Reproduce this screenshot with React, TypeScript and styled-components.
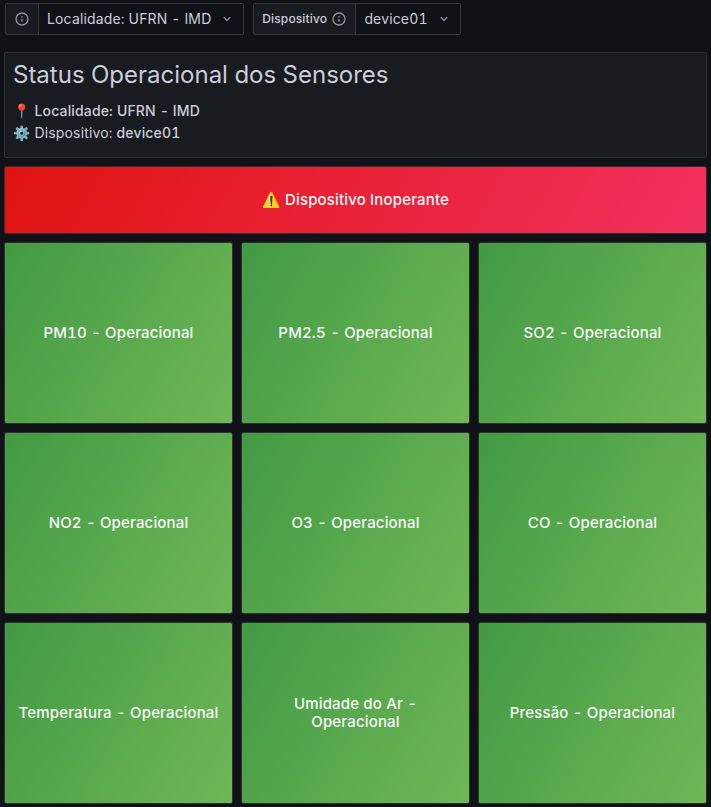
import React from 'react';
import styled, { createGlobalStyle } from 'styled-components';

const GlobalStyle = createGlobalStyle`
  *, *::before, *::after { box-sizing: border-box; }
  body {
    margin: 0;
    background: #111217;
    color: #ccccdc;
    font: 400 14px/22px Inter, "Noto Color Emoji", sans-serif;
    letter-spacing: 0.15px;
  }
`;

const Page = styled.div`
  width: 711px;
  height: 807px;
  overflow: hidden;
  padding: 3px 4px 0;
  font-variant-numeric: tabular-nums;
`;

const Toolbar = styled.header`
  display: flex;
  gap: 9px;
  height: 49px;
  padding-left: 1px;
`;

const Variable = styled.div<{ $width: number }>`
  display: flex;
  width: ${(p) => p.$width}px;
  height: 32px;
  border: 1px solid #36373d;
  border-radius: 2px;
`;

const VariableLabel = styled.label<{ $width: number }>`
  display: flex;
  flex: none;
  align-items: center;
  justify-content: center;
  gap: 4px;
  width: ${(p) => p.$width}px;
  background: #181b1f;
  border-right: 1px solid #36373d;
  font-size: 12px;
  font-weight: 500;
  letter-spacing: 0.13px;
`;

const VariableValue = styled.button`
  display: flex;
  flex: 1;
  align-items: center;
  justify-content: space-between;
  padding: 0 8px;
  border: 0;
  background: none;
  color: inherit;
  font: inherit;
  font-variant-numeric: tabular-nums;
  letter-spacing: inherit;
  white-space: nowrap;
`;

const Icon = styled.svg`
  flex: none;
  color: #8e8f98;
`;

const Panels = styled.main`
  display: grid;
  grid-template-columns: repeat(3, 229px);
  grid-template-rows: 106px 68px repeat(3, 182px);
  gap: 8px;
`;

const Panel = styled.section`
  border: 1px solid #2e3036;
  border-radius: 2px;
  background: #181b1f;
`;

const InfoPanel = styled(Panel)`
  grid-column: 1 / -1;
  padding: 8px;
`;

const Title = styled.h1`
  margin: 0 0 11px;
  font-size: 24px;
  font-weight: 400;
  line-height: 28px;
  letter-spacing: 0;
`;

const InfoLine = styled.div`
  white-space: nowrap;
`;

const Strong = styled.span`
  font-weight: 500;
`;

const StatPanel = styled(Panel)<{ $alert?: boolean }>`
  grid-column: ${(p) => (p.$alert ? '1 / -1' : 'auto')};
  display: flex;
  align-items: center;
  justify-content: center;
  padding: 0 8px;
  background: ${(p) =>
    p.$alert
      ? 'linear-gradient(120deg, #e01310, #f1315f)'
      : 'linear-gradient(120deg, #429a43, #6fb757)'} padding-box;
  color: #f7f8fa;
  font-size: 15px;
  font-weight: 500;
  line-height: 18px;
  letter-spacing: 0.16px;
  text-align: center;
`;

const InfoIcon = () => (
  <Icon width="16" height="16" viewBox="0 0 24 24" fill="currentColor">
    <path d="M12 2a10 10 0 1 0 10 10A10 10 0 0 0 12 2Zm0 18a8 8 0 1 1 8-8 8 8 0 0 1-8 8Zm0-8.500a1 1 0 0 0-1 1v3a1 1 0 0 0 2 0v-3a1 1 0 0 0-1-1Zm0-4a1.250 1.250 0 1 0 1.250 1.250A1.250 1.250 0 0 0 12 7.500Z" />
  </Icon>
);

const Chevron = () => (
  <Icon width="16" height="16" viewBox="0 0 24 24" fill="currentColor">
    <path d="M17 9.170a1 1 0 0 0-1.410 0L12 12.710 8.460 9.170a1 1 0 0 0-1.410 0 1 1 0 0 0 0 1.420l4.240 4.240a1 1 0 0 0 1.420 0L17 10.590a1 1 0 0 0 0-1.420Z" />
  </Icon>
);

const sensors = ['PM10', 'PM2.5', 'SO2', 'NO2', 'O3', 'CO', 'Temperatura', 'Umidade do Ar', 'Pressão'];

export default function App() {
  return (
    <>
      <GlobalStyle />
      <Page>
        <Toolbar>
          <Variable $width={239}>
            <VariableLabel $width={33}><InfoIcon /></VariableLabel>
            <VariableValue>Localidade: UFRN - IMD <Chevron /></VariableValue>
          </Variable>
          <Variable $width={208}>
            <VariableLabel $width={102.4}>Dispositivo <InfoIcon /></VariableLabel>
            <VariableValue>device01 <Chevron /></VariableValue>
          </Variable>
        </Toolbar>
        <Panels>
          <InfoPanel>
            <Title>Status Operacional dos Sensores</Title>
            <InfoLine>📍 <Strong>Localidade: UFRN - IMD</Strong></InfoLine>
            <InfoLine>⚙️ Dispositivo: <Strong>device01</Strong></InfoLine>
          </InfoPanel>
          <StatPanel $alert>⚠️ Dispositivo Inoperante</StatPanel>
          {sensors.map((name) => (
            <StatPanel key={name}>{name} - Operacional</StatPanel>
          ))}
        </Panels>
      </Page>
    </>
  );
}
